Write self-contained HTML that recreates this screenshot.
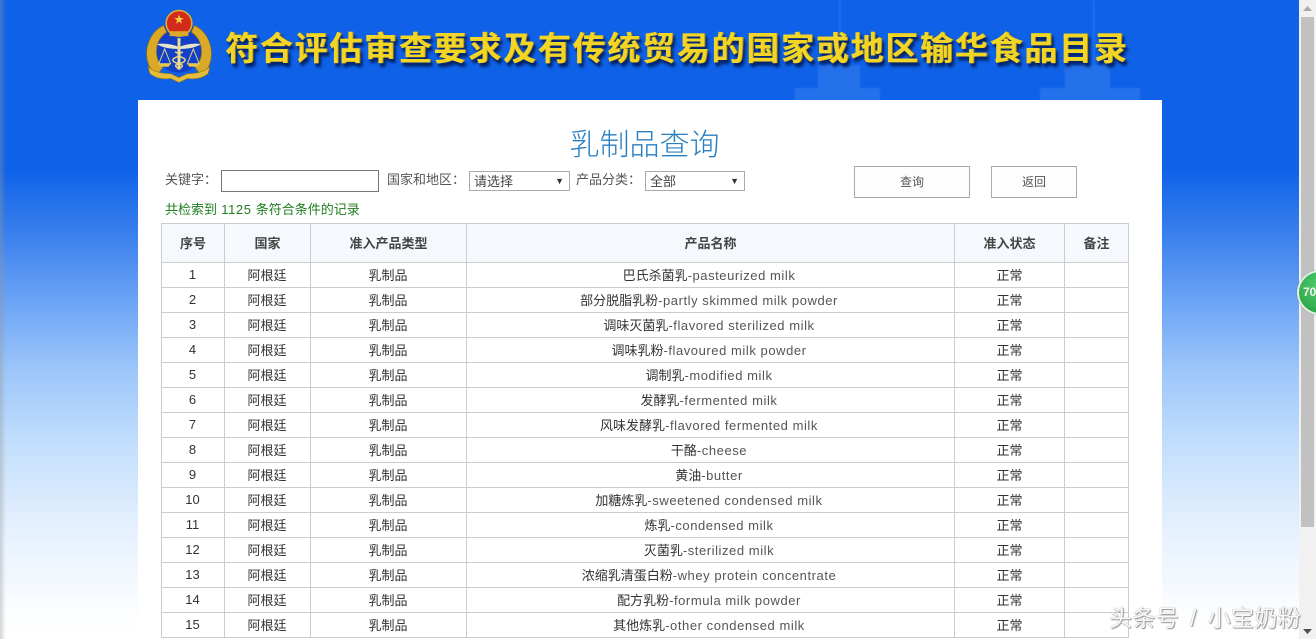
<!DOCTYPE html>
<html lang="zh-CN"><head><meta charset="utf-8"><title>乳制品查询</title>
<style>
*{box-sizing:border-box}
html,body{margin:0;padding:0}
body{width:1316px;height:639px;overflow:hidden;position:relative;font-family:"Liberation Sans","Noto Sans CJK SC",sans-serif;color:#333;
background:linear-gradient(180deg,#0f62e8 0,#0f62e8 170px,#3a80ee 235px,#6ba3f5 300px,#9cc6fa 370px,#c5e0fc 450px,#e6f1fe 530px,#fbfdff 610px,#fff 639px)}
.abs{position:absolute}
#ls{left:0;top:0;width:6px;height:639px;background:linear-gradient(90deg,rgba(150,150,150,.4),rgba(150,150,150,0))}
#banner{left:225px;top:23px;font:bold 33px/46px "Noto Sans CJK SC",sans-serif;letter-spacing:1.75px;color:#f3d625;white-space:nowrap;text-shadow:1px 0 0 #a88a10,2px 3px 2px #04246c,3px 4px 3px rgba(3,30,90,.75)}
#panel{left:138px;top:100px;width:1024px;height:539px;background:#fff}
#h{left:138px;top:121px;width:1013px;text-align:center;font:300 30px/42px "Noto Sans CJK SC",sans-serif;color:#2a7fc1}
.lb{font-size:13px;line-height:18px;color:#555;white-space:nowrap}
.in{border:1px solid #767676;background:#fff}
.sel{border:1px solid #aaa;background:#fff;font-size:13px;line-height:19px;padding-left:4px;color:#444}
.sel i{position:absolute;right:5px;top:0;font-style:normal;font-size:9px;color:#333}
.btn{border:1px solid #aaa;background:#fdfdfd;text-align:center;font-size:12px;line-height:30px;color:#555}
#cnt{left:165px;top:201px;font-size:13px;line-height:18px;color:#1f7d1f;white-space:nowrap}
#cnt span{letter-spacing:.6px}
table{position:absolute;left:161px;top:223px;width:967px;border-collapse:collapse;table-layout:fixed;font-size:13px;color:#333}
td,th{border:1px solid #ccc;text-align:center;padding:0 0 2px;height:25px;overflow:hidden;white-space:nowrap}
td:nth-child(4){padding-right:3px}
td:nth-child(1),td:nth-child(2),td:nth-child(3){padding-right:1px}
td b{font-weight:normal;letter-spacing:.56px;color:#555}
th{height:39px;background:#f5f9fd;font-weight:bold;color:#444}
#sb{left:1299px;top:0;width:17px;height:639px;background:#f1f1f1}
#th{left:1301px;top:17px;width:13px;height:510px;background:#c1c1c1}
#ball{left:1297px;top:270px;width:46px;height:45px;border-radius:50%;background:radial-gradient(circle at 50% 35%,#55d072,#1f9a3c);border:2px solid #e4efe6;box-shadow:0 0 1px #2a8a45;color:#f4f4e8;font:bold 12px/41px "Liberation Sans",sans-serif;padding-left:4px}
#wm{left:1109px;top:602px;font-size:23px;line-height:32px;color:#fafafa;white-space:nowrap;text-shadow:0 0 1px #777,1px 1px 1px #999;letter-spacing:.4px;word-spacing:4px}
</style></head><body>
<div class="abs" id="ls"></div>
<svg class="abs" style="left:790px;top:0;filter:blur(.8px)" width="360" height="100" viewBox="0 0 360 100" fill="#5a94f2" opacity=".3"><rect x="49" y="0" width="1.500" height="100"/><rect x="28" y="65" width="42" height="35"/><rect x="5" y="88" width="85" height="12"/><rect x="303" y="0" width="1.500" height="100"/><rect x="275" y="65" width="45" height="35"/><rect x="250" y="88" width="100" height="12"/></svg>
<svg class="abs" style="left:143px;top:8px" width="72" height="76" viewBox="0 0 73 76">
<ellipse cx="36.5" cy="39" rx="25" ry="26" fill="#1240c8"/>
<g id="w" fill="#d9a927" stroke="#8a6a1c" stroke-width=".7">
<path d="M21 17C6 24-1 44 7 60l7 8 6-8C11 50 11 33 24 24z"/>
<path d="M52 17C67 24 74 44 66 60l-7 8-6-8C62 50 62 33 49 24z"/>
</g>
<path d="M5 59C12 65 20 66 28 66l8.500 4 8.500-4C53 66 61 65 68 59l-2 7C60 71 52 72 45 71l-8.500 4L28 71C21 72 13 71 7 66z" fill="#e4bd3a" stroke="#8a6a1c" stroke-width=".6"/>
<circle cx="36.500" cy="15" r="13" fill="#d22b1c" stroke="#e0b030" stroke-width="1.600"/>
<path d="M36.500 6l1.200 3.600h3.700l-3 2.200 1.100 3.600-3-2.200-3 2.200 1.100-3.600-3-2.200h3.700z" fill="#f4d040"/>
<rect x="27" y="23" width="19" height="5" fill="#d9a927"/>
<path d="M14 36c8-1 15 0 22.500 3 7.500-3 14.500-4 22.500-3-6 4-14 5-22.500 5s-16.500-1-22.500-5z" fill="#e8e4c8"/>
<rect x="35" y="30" width="3" height="32" fill="#eedd90"/>
<path d="M22 41l-6 15h12zM51 41l-6 15h12z" fill="none" stroke="#e8d480" stroke-width="1"/>
<path d="M16 56h12l-2 3h-8zM45 56h12l-2 3h-8z" fill="#e8c840"/>
<path d="M32.500 44c5 2 5 4 0 6s-1 5 4 6 4 3 0 5M40.500 44c-5 2-5 4 0 6s1 5-4 6-4 3 0 5" fill="none" stroke="#e8d480" stroke-width="1.500"/>
</svg>
<div class="abs" id="banner">符合评估审查要求及有传统贸易的国家或地区输华食品目录</div>
<div class="abs" id="panel"></div>
<div class="abs" id="h">乳制品查询</div>
<div class="abs lb" style="left:165px;top:171px">关键字：</div>
<div class="abs in" style="left:221px;top:170px;width:158px;height:22px"></div>
<div class="abs lb" style="left:387px;top:171px">国家和地区：</div>
<div class="abs sel" style="left:469px;top:171px;width:101px;height:20px">请选择<i>▼</i></div>
<div class="abs lb" style="left:576px;top:171px">产品分类：</div>
<div class="abs sel" style="left:645px;top:171px;width:100px;height:20px">全部<i>▼</i></div>
<div class="abs btn" style="left:854px;top:166px;width:116px;height:32px">查询</div>
<div class="abs btn" style="left:991px;top:166px;width:86px;height:32px">返回</div>
<div class="abs" id="cnt">共检索到<span> 1125 </span>条符合条件的记录</div>
<table><colgroup><col style="width:63px"><col style="width:86px"><col style="width:156px"><col style="width:488px"><col style="width:110px"><col style="width:64px"></colgroup>
<tr><th>序号</th><th>国家</th><th>准入产品类型</th><th>产品名称</th><th>准入状态</th><th>备注</th></tr>
<tr><td>1</td><td>阿根廷</td><td>乳制品</td><td>巴氏杀菌乳<b>-pasteurized milk</b></td><td>正常</td><td></td></tr>
<tr><td>2</td><td>阿根廷</td><td>乳制品</td><td>部分脱脂乳粉<b>-partly skimmed milk powder</b></td><td>正常</td><td></td></tr>
<tr><td>3</td><td>阿根廷</td><td>乳制品</td><td>调味灭菌乳<b>-flavored sterilized milk</b></td><td>正常</td><td></td></tr>
<tr><td>4</td><td>阿根廷</td><td>乳制品</td><td>调味乳粉<b>-flavoured milk powder</b></td><td>正常</td><td></td></tr>
<tr><td>5</td><td>阿根廷</td><td>乳制品</td><td>调制乳<b>-modified milk</b></td><td>正常</td><td></td></tr>
<tr><td>6</td><td>阿根廷</td><td>乳制品</td><td>发酵乳<b>-fermented milk</b></td><td>正常</td><td></td></tr>
<tr><td>7</td><td>阿根廷</td><td>乳制品</td><td>风味发酵乳<b>-flavored fermented milk</b></td><td>正常</td><td></td></tr>
<tr><td>8</td><td>阿根廷</td><td>乳制品</td><td>干酪<b>-cheese</b></td><td>正常</td><td></td></tr>
<tr><td>9</td><td>阿根廷</td><td>乳制品</td><td>黄油<b>-butter</b></td><td>正常</td><td></td></tr>
<tr><td>10</td><td>阿根廷</td><td>乳制品</td><td>加糖炼乳<b>-sweetened condensed milk</b></td><td>正常</td><td></td></tr>
<tr><td>11</td><td>阿根廷</td><td>乳制品</td><td>炼乳<b>-condensed milk</b></td><td>正常</td><td></td></tr>
<tr><td>12</td><td>阿根廷</td><td>乳制品</td><td>灭菌乳<b>-sterilized milk</b></td><td>正常</td><td></td></tr>
<tr><td>13</td><td>阿根廷</td><td>乳制品</td><td>浓缩乳清蛋白粉<b>-whey protein concentrate</b></td><td>正常</td><td></td></tr>
<tr><td>14</td><td>阿根廷</td><td>乳制品</td><td>配方乳粉<b>-formula milk powder</b></td><td>正常</td><td></td></tr>
<tr><td>15</td><td>阿根廷</td><td>乳制品</td><td>其他炼乳<b>-other condensed milk</b></td><td>正常</td><td></td></tr>
</table>
<div class="abs" id="sb"></div><div class="abs" id="th"></div>
<svg class="abs" style="left:1303px;top:6px" width="9" height="6"><path d="M4.500 0L9 5H0z" fill="#a8a8a8"/></svg>
<svg class="abs" style="left:1303px;top:629px" width="9" height="6"><path d="M0 0h9L4.500 5z" fill="#505050"/></svg>
<div class="abs" id="ball">70</div>
<div class="abs" id="wm">头条号 / 小宝奶粉</div>
</body></html>
